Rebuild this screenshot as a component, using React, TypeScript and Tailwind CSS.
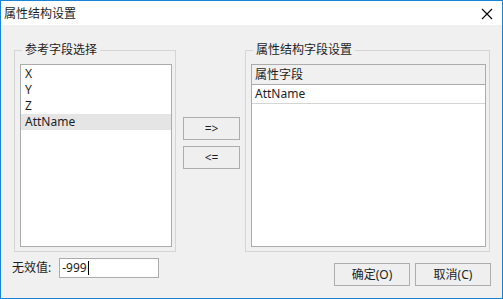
import React from 'react';

const font = { fontFamily: '"Noto Sans", "Noto Sans CJK SC", sans-serif' };

function Group({ title, children }: { title: string; children: React.ReactNode }) {
  return (
    <fieldset className="border border-[#d5d5d5] pl-[5px] pr-[3px] pt-[6px] pb-[4px] h-full flex flex-col min-w-0">
      <legend className="ml-[2px] px-[3px] text-[12px] leading-[16px] text-[#1e1e1e]">{title}</legend>
      {children}
    </fieldset>
  );
}

function Btn({ children, w = 'w-[76px]' }: { children: React.ReactNode; w?: string }) {
  return (
    <button
      type="button"
      className={`${w} h-[23px] border border-[#adadad] bg-[#efefef] text-[12px] leading-[16px] text-[#1e1e1e] flex items-center justify-center`}
    >
      {children}
    </button>
  );
}

export default function App() {
  const fields = ['X', 'Y', 'Z', 'AttName'];
  const selected = 'AttName';

  return (
    <div style={font} className="w-[503px] h-[299px] border border-[#1883d7] flex flex-col bg-[#f0f0f0] text-[12px] text-[#1e1e1e] overflow-hidden">
      {/* title bar */}
      <div className="h-[24px] bg-white flex items-center justify-between pl-[3px] pr-[9px] shrink-0">
        <span className="leading-[16px] pt-px">属性结构设置</span>
        <svg width="12" height="12" viewBox="0 0 12 12" className="mt-px">
          <path d="M1 1 L11 11 M11 1 L1 11" stroke="#000" strokeWidth="1.1" fill="none" />
        </svg>
      </div>

      {/* body */}
      <div className="flex-1 flex flex-col pl-[13px] pr-[12px] pt-[17px]">
        <div className="flex h-[210px]">
          <div className="w-[162px] h-full">
            <Group title="参考字段选择">
              <div className="flex-1 border border-[#acacac] bg-white pt-px">
                {fields.map(f => (
                  <div
                    key={f}
                    className={`h-[16px] leading-[16px] pl-[4px] ${f === selected ? 'bg-[#e5e5e5]' : ''}`}
                  >
                    {f}
                  </div>
                ))}
              </div>
            </Group>
          </div>

          <div className="flex flex-col gap-[6px] pt-[75px] ml-[7px] mr-[5px]">
            <Btn w="w-[57px]">=&gt;</Btn>
            <Btn w="w-[57px]">&lt;=</Btn>
          </div>

          <div className="flex-1 h-full">
            <Group title="属性结构字段设置">
              <div className="flex-1 border border-[#acacac] bg-white flex flex-col">
                <div className="h-[20px] bg-[#f0f0f0] border-b border-[#acacac] pl-[3px] flex items-center leading-[16px]">
                  属性字段
                </div>
                <div className="h-[19px] border-b border-[#d5d5d5] pl-[3px] flex items-center leading-[16px]">
                  AttName
                </div>
              </div>
            </Group>
          </div>
        </div>

        <div className="flex justify-between items-start">
          <div className="flex items-center mt-[6px] ml-[-2px]">
            <span className="leading-[16px] mr-[8px]">无效值:</span>
            <div className="w-[100px] h-[20px] border border-[#acacac] bg-white flex items-center pl-[2px]">
              <span className="leading-[16px]">-999</span>
              <span className="w-px h-[14px] bg-black ml-px" />
            </div>
          </div>
          <div className="flex gap-[5px] mt-[11px] mr-[-1px]">
            <Btn>确定(O)</Btn>
            <Btn>取消(C)</Btn>
          </div>
        </div>
      </div>
    </div>
  );
}
